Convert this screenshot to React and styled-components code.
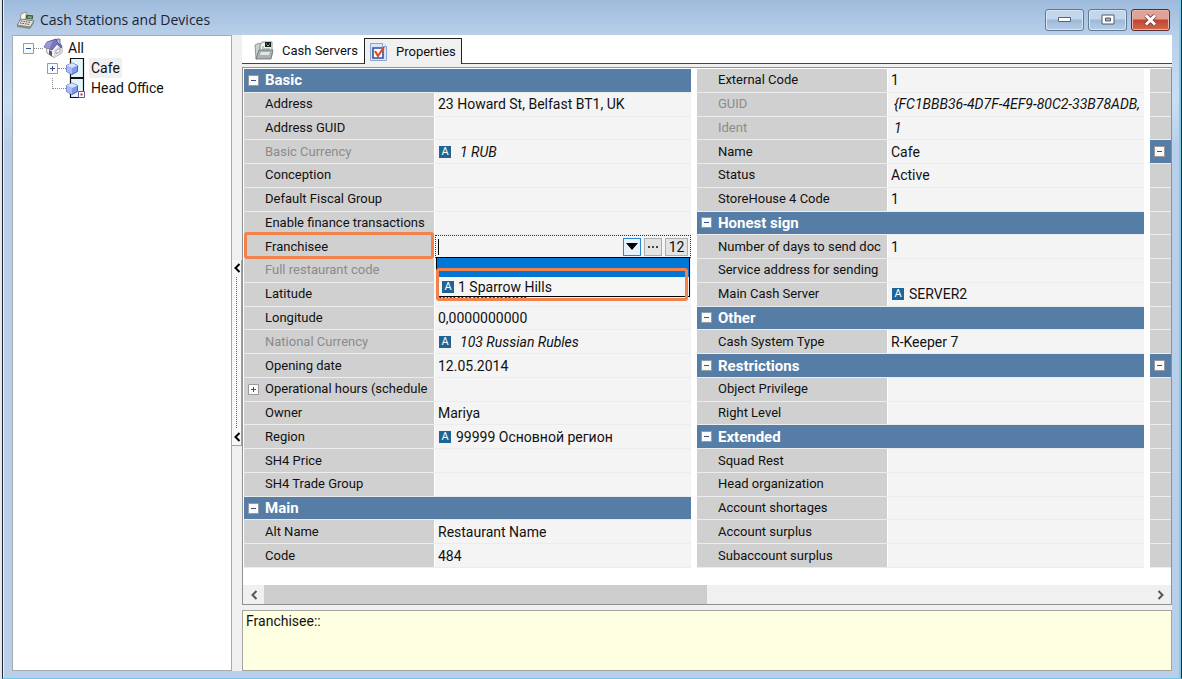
import React from 'react';
import styled, { createGlobalStyle, css } from 'styled-components';

const GlobalStyle = createGlobalStyle`
* {
    box-sizing: border-box;
}
body {
    margin: 0;
    font-family: Roboto, "Liberation Sans", sans-serif;
    font-size: 14px;
    line-height: 20px;
    color: #111;
}
button, input {
    font: inherit;
    color: inherit;
    margin: 0;
    padding: 0;
}
`;

const basic = [
	{ section: 'Basic' },
	{ label: 'Address', value: '23 Howard St, Belfast BT1, UK' },
	{ label: 'Address GUID' },
	{ label: 'Basic Currency', value: '1 RUB', locked: true, link: true },
	{ label: 'Conception' },
	{ label: 'Default Fiscal Group' },
	{ label: 'Enable finance transactions' },
	{ label: 'Franchisee', editor: true },
	{ label: 'Full restaurant code', locked: true },
	{ label: 'Latitude', value: '0,0000000000' },
	{ label: 'Longitude', value: '0,0000000000' },
	{ label: 'National Currency', value: '103 Russian Rubles', locked: true, link: true },
	{ label: 'Opening date', value: '12.05.2014' },
	{ label: 'Operational hours (schedule', expandable: true },
	{ label: 'Owner', value: 'Mariya' },
	{ label: 'Region', value: '99999 Основной регион', link: true },
	{ label: 'SH4 Price' },
	{ label: 'SH4 Trade Group' },
	{ section: 'Main' },
	{ label: 'Alt Name', value: 'Restaurant Name' },
	{ label: 'Code', value: '484' },
];

const extra = [
	{ label: 'External Code', value: '1' },
	{ label: 'GUID', value: '{FC1BBB36-4D7F-4EF9-80C2-33B78ADB,', locked: true },
	{ label: 'Ident', value: '1', locked: true },
	{ label: 'Name', value: 'Cafe' },
	{ label: 'Status', value: 'Active' },
	{ label: 'StoreHouse 4 Code', value: '1' },
	{ section: 'Honest sign' },
	{ label: 'Number of days to send doc', value: '1' },
	{ label: 'Service address for sending' },
	{ label: 'Main Cash Server', value: 'SERVER2', link: true },
	{ section: 'Other' },
	{ label: 'Cash System Type', value: 'R-Keeper 7' },
	{ section: 'Restrictions' },
	{ label: 'Object Privilege' },
	{ label: 'Right Level' },
	{ section: 'Extended' },
	{ label: 'Squad Rest' },
	{ label: 'Head organization' },
	{ label: 'Account shortages' },
	{ label: 'Account surplus' },
	{ label: 'Subaccount surplus' },
];

// third column is cut by the panel edge, only its section marks are seen
const edge = Array.from({ length: 21 }, (_, i) => i === 3 || i === 12);

const RegisterIcon = () => (
	<svg width="20" height="18" viewBox="0 0 20 18" aria-hidden="true">
		<path d="M5 3l5-2 1 7-7 2z" fill="#f8f8f2" stroke="#77776f" strokeWidth=".7" />
		<path d="M10 3l8 1-1 5-8-1z" fill="#3f5a45" stroke="#c9d0c8" strokeWidth=".9" />
		<path d="M12 5l4 .5-.5 2-4-.5z" fill="#7fa588" />
		<path d="M1 14l4-6 13 2-4 6z" fill="#e6e4dc" stroke="#66665f" strokeWidth=".8" />
		<path d="M1 14l13 2v2L1 16zM14 16l4-6v2l-4 6z" fill="#8b8a82" />
		<path d="M5 10l10 1.500M4 12l10 1.500" stroke="#4a4a45" strokeWidth="1" strokeDasharray="1.500 1" />
	</svg>
);

const HouseIcon = () => (
	<svg width="20" height="20" viewBox="0 0 20 20" aria-hidden="true">
		<path d="M3 9l1 6 7 4.500 8-4.500V9l-6-5z" fill="#f6f5fa" stroke="#85838f" strokeWidth=".8" />
		<path d="M11 12v7.500l8-4.500V9l-2-2z" fill="#dcdbe8" />
		<path d="M1 9l3-5 9-3 6 7-1 2-4-4-5 6z" fill="#7a78bd" stroke="#4c4a88" strokeWidth=".8" />
		<path d="M1 9l3-5 6-1-4 8z" fill="#9b99d4" />
		<path d="M14 4V1h3v6z" fill="#b9b8de" stroke="#4c4a88" strokeWidth=".7" />
		<path d="M6 12l3 1.500v5L6 16.500z" fill="#6b5348" />
		<path d="M13 12.500l4-2v3l-4 2z" fill="#fff" stroke="#8b8b98" strokeWidth=".7" />
	</svg>
);

const PlaceIcon = ({ marked }) => (
	<svg width="20" height="20" viewBox="0 0 20 20" aria-hidden="true">
		<path d="M4.500 .5h13v19h-13z" fill="#e3f4fa" stroke="#111" strokeWidth="1.200" />
		<path d="M6 5l5.500 2.500v6L6 16.500 .5 13.500v-6z" fill="#7f9be8" stroke="#4055a8" strokeWidth=".9" />
		<path d="M6 5l5.500 2.500L6 10 .5 7.500z" fill="#d6e2ff" />
		<path d="M6 10v6.500L.5 13.500v-6z" fill="#a6bcf5" />
		{marked && (
			<>
				<path d="M12.500 13.500h6v6h-6z" fill="#fff" stroke="#5a5aa0" />
				<path d="M14.500 15.500h2v2h-2z" fill="#d2233c" />
			</>
		)}
	</svg>
);

const FolderIcon = () => (
	<svg width="22" height="20" viewBox="0 0 22 20" aria-hidden="true">
		<path d="M2 4l4-2 2 1v13l-5 2z" fill="#c9cecf" stroke="#7d8587" strokeWidth=".8" />
		<path d="M7 4l2-3h10v13H7z" fill="#eef1f0" stroke="#747c7d" strokeWidth=".8" />
		<path d="M12 1h6v5h-6z" fill="#15201a" />
		<path d="M13 2.500h1v1h-1zM16 2.500h1v1h-1zM14 4h2v1h-2z" fill="#6fdc7c" />
		<path d="M9 6h2M9 8h8" stroke="#8f9798" />
		<path d="M6 9h14l-2 9H3z" fill="#a9b1b2" stroke="#687072" strokeWidth=".8" />
		<path d="M8 11h9l-1 3H7z" fill="#e2e6e6" />
	</svg>
);

const CheckIcon = () => (
	<svg width="17" height="20" viewBox="0 0 17 20" aria-hidden="true">
		<path d="M.5 1.500h12l4 3v14H.5z" fill="#d9e6f7" stroke="#8aa6d0" />
		<path d="M12.500 1.500v3h4" fill="#fff" stroke="#8aa6d0" />
		<path d="M3 6h10v10H3z" fill="#fff" stroke="#31509c" strokeWidth="1.600" />
		<path d="M5 9l3 5 6-9" fill="none" stroke="#e2492f" strokeWidth="2.200" />
	</svg>
);

const Expander = ({ open }) => (
	<svg width="11" height="11" viewBox="0 0 11 11" aria-hidden="true">
		<path d="M.5 .5h10v10H.5z" fill="#fbfbfb" stroke="#9a9a9a" />
		<path d={open ? 'M3 5.500h5' : 'M3 5.500h5M5.500 3v5'} stroke="#35508c" />
	</svg>
);

const Chevron = ({ right }) => (
	<svg width="8" height="10" viewBox="0 0 8 10" aria-hidden="true">
		<path d={right ? 'M1.500 1l4 4-4 4' : 'M6.500 1l-4 4 4 4'} fill="none" stroke="currentColor" strokeWidth="2" />
	</svg>
);

const Row = ({ row }) => {
	if (row.section) {
		return (
			<SectionRow>
				<SectionCell colSpan="2">
					<Toggle aria-label={row.section}><Expander open /></Toggle>
					{row.section}
				</SectionCell>
			</SectionRow>
		);
	}
	return (
		<PropertyRow>
			<LabelCell scope="row" $locked={row.locked} $marked={row.editor}>
				{row.expandable && <Toggle aria-label="Expand"><Expander /></Toggle>}
				{row.editor ? <label htmlFor="franchisee">{row.label}</label> : row.label}
			</LabelCell>
			{row.editor ? (
				<EditorCell>
					<Editor>
						<EditorInput id="franchisee" />
						<EditorButton $primary aria-label="Open list">
							<svg width="12" height="7" viewBox="0 0 12 7"><path d="M0 0h12L6 7z" fill="#000" /></svg>
						</EditorButton>
						<EditorButton aria-label="Browse">
							<svg width="10" height="2" viewBox="0 0 10 2"><path d="M0 0h2v2H0zM4 0h2v2H4zM8 0h2v2H8z" fill="#444" /></svg>
						</EditorButton>
						<EditorButton $wide>12</EditorButton>
					</Editor>
					<Options role="listbox">
						<Option role="option" aria-selected="true" $active />
						<Option role="option" aria-selected="false"><Tag>A</Tag>1 Sparrow Hills</Option>
						<OptionMark />
					</Options>
				</EditorCell>
			) : (
				<ValueCell $locked={row.locked} $link={row.link}>
					{row.link && <Tag>A</Tag>}
					<span>{row.value}</span>
				</ValueCell>
			)}
		</PropertyRow>
	);
};

const App = () => {
	return (
		<Desktop>
			<GlobalStyle />
			<Window>
				<TitleBar>
					<RegisterIcon />
					<Title>Cash Stations and Devices</Title>
					<WindowButton aria-label="Minimize">
						<svg width="15" height="7" viewBox="0 0 15 7"><path d="M1.500 1.500h12v4h-12z" fill="#fff" stroke="#5a6478" /></svg>
					</WindowButton>
					<WindowButton aria-label="Maximize">
						<svg width="14" height="11" viewBox="0 0 14 11"><path d="M1 1h12v9H1z" fill="#fff" stroke="#4f596d" /><path d="M4.500 4h5v3h-5z" fill="#9fb4d0" stroke="#4f596d" /></svg>
					</WindowButton>
					<WindowButton $close aria-label="Close">
						<svg width="15" height="12" viewBox="0 0 15 12"><path d="M3 1.500l9 9M12 1.500l-9 9" stroke="#6b3a3a" strokeWidth="4.500" /><path d="M3 1.500l9 9M12 1.500l-9 9" stroke="#fff" strokeWidth="3" /></svg>
					</WindowButton>
				</TitleBar>
				<Content>
					<Tree>
						<TreeItem>
							<Toggle aria-label="Collapse All"><Expander open /></Toggle>
							<Dots />
							<HouseIcon />
							<TreeText>All</TreeText>
						</TreeItem>
						<Branch>
							<TreeItem>
								<Toggle aria-label="Expand Cafe"><Expander /></Toggle>
								<Dots $short />
								<PlaceIcon />
								<TreeText $selected>Cafe</TreeText>
							</TreeItem>
							<TreeItem>
								<Corner />
								<PlaceIcon marked />
								<TreeText>Head Office</TreeText>
							</TreeItem>
						</Branch>
					</Tree>
					<Splitter>
						<SplitterButton aria-label="Hide tree">
							<Chevron />
							<SplitterDots />
							<Chevron />
						</SplitterButton>
					</Splitter>
					<Main>
						<Tabs role="tablist">
							<Tab role="tab"><FolderIcon />Cash Servers</Tab>
							<Tab role="tab" aria-selected="true" $active><CheckIcon />Properties</Tab>
						</Tabs>
						<Sheet>
							<Columns>
								<PropertyTable>
									<tbody>{basic.map((row, i) => <Row key={i} row={row} />)}</tbody>
								</PropertyTable>
								<PropertyTable>
									<tbody>{extra.map((row, i) => <Row key={i} row={row} />)}</tbody>
								</PropertyTable>
								<EdgeColumn>
									{edge.map((section, i) => (
										<EdgeCell key={i} $section={section}>{section && <Expander open />}</EdgeCell>
									))}
								</EdgeColumn>
							</Columns>
							<ScrollBar>
								<ScrollButton aria-label="Scroll left"><Chevron /></ScrollButton>
								<ScrollTrack><ScrollThumb /></ScrollTrack>
								<ScrollButton aria-label="Scroll right"><Chevron right /></ScrollButton>
							</ScrollBar>
						</Sheet>
						<Hint>Franchisee::</Hint>
					</Main>
				</Content>
			</Window>
		</Desktop>
	);
};
export default App;

const Desktop = styled.div`
display: flex;
min-height: 100vh;
padding-left: 2px;
background: #e4e9ef;
`;
const Window = styled.div`
flex: 1;
display: flex;
flex-direction: column;
min-width: 0;
padding: 0 9px 7px;
border-left: 1px solid #1c2530;
border-right: 1px solid #14323c;
border-bottom: 1px solid #6fc6e6;
background: linear-gradient(#9ebbdc, #b9cfe9 35px, #cbdff3 100px, #b9cfe9 145px);
box-shadow: inset 1px 0 #e8f2fb, inset -2px 0 #7cc9ea;
`;
const TitleBar = styled.header`
display: flex;
align-items: center;
gap: 4px;
height: 35px;
padding: 4px 2px 0 4px;
`;
const Title = styled.h1`
flex: 1;
margin: 0;
font: 400 14px/20px "Open Sans", sans-serif;
color: #1b2430;
`;
const WindowButton = styled.button`
display: flex;
align-items: center;
justify-content: center;
width: 39px;
height: 22px;
border: 1px solid #5f7894;
border-radius: 3px;
background: linear-gradient(#c3d6ec 45%, #9db9d9 50%, #b7cde8);
box-shadow: inset 0 0 0 1px #d9e6f4;
${({ $close }) => $close && css`
    border-color: #5b2a2a;
    background: linear-gradient(#e0a197 45%, #c2432d 50%, #cf6a50);
    box-shadow: inset 0 0 0 1px #e6b5aa;
`}
`;
const Content = styled.div`
flex: 1;
display: flex;
min-height: 0;
background: #f0f0f0;
`;
const Tree = styled.nav`
width: 220px;
padding: 2px 0 0 10px;
border: 1px solid #a5abb3;
background: #fff;
`;
const TreeItem = styled.div`
display: flex;
align-items: center;
height: 20px;
`;
const Branch = styled.div`
padding-left: 24px;
`;
const TreeText = styled.span`
margin-left: 3px;
padding: 0 2px;
${({ $selected }) => $selected && 'background: #f0f0f0;'}
`;
const Dots = styled.span`
width: ${({ $short }) => ($short ? '8px' : '9px')};
border-top: 1px dotted #888;
`;
const Corner = styled.span`
align-self: flex-start;
width: 14px;
height: 11px;
margin-left: 5px;
border-left: 1px dotted #888;
border-bottom: 1px dotted #888;
`;
const Toggle = styled.button`
display: flex;
border: 0;
background: none;
`;
const Splitter = styled.div`
display: flex;
align-items: center;
width: 10px;
`;
const SplitterButton = styled.button`
display: flex;
flex-direction: column;
align-items: center;
justify-content: space-between;
width: 10px;
height: 186px;
padding: 3px 0;
border: 1px solid #a0a0a0;
border-width: 0 1px 1px 0;
background: #f8f8f8;
color: #000;
`;
const SplitterDots = styled.span`
flex: 1;
margin: 4px 0;
border-left: 1px dotted #2f74c0;
`;
const Main = styled.main`
flex: 1;
display: flex;
flex-direction: column;
min-width: 0;
`;
const Tabs = styled.div`
display: flex;
align-items: flex-end;
height: 29px;
padding: 2px 2px 0;
border-bottom: 1px solid #444;
background: #fff;
font-size: 13px;
`;
const Tab = styled.button`
display: flex;
align-items: center;
gap: 7px;
height: 24px;
padding: 0 6px 0 9px;
border: 0;
background: none;
white-space: nowrap;
${({ $active }) => $active && css`
    gap: 9px;
    height: 26px;
    padding: 0 5px;
    margin-bottom: -1px;
    border: 1px solid #222;
    border-bottom: 0;
    background: #f0f0f0;
`}
`;
const Sheet = styled.section`
flex: 1;
display: flex;
flex-direction: column;
margin: 3px 0 5px;
border: 1px solid #909090;
background: #fff;
`;
const Columns = styled.div`
flex: 1;
display: flex;
gap: 6px;
margin-bottom: 17px;
padding: 1px 0 0 1px;
`;
const PropertyTable = styled.table`
flex: 1;
display: grid;
grid-auto-rows: 1fr;
min-width: 0;
tbody {
    display: contents;
}
`;
const PropertyRow = styled.tr`
display: grid;
grid-template-columns: 190px 1fr;
gap: 1px;
min-height: 20px;
border-bottom: 1px solid #ececec;
`;
const SectionRow = styled.tr`
display: grid;
min-height: 20px;
border-bottom: 1px solid #ececec;
`;
const SectionCell = styled.th`
display: flex;
align-items: center;
gap: 6px;
padding: 0 4px;
background: #567da6;
color: #fff;
font-size: 15px;
text-align: left;
`;
const LabelCell = styled.th`
position: relative;
display: flex;
align-items: center;
gap: 6px;
min-width: 0;
padding: 0 0 0 21px;
overflow: hidden;
background: #d0d0d0;
color: ${({ $locked }) => ($locked ? '#8b8b8b' : '#111')};
font-size: 13px;
font-weight: 400;
text-align: left;
white-space: nowrap;
&:has(button) {
    padding-left: 4px;
}
${({ $marked }) => $marked && css`
    overflow: visible;
    &::after {
        content: '';
        position: absolute;
        inset: -3px 0 -1px;
        border: 3px solid #f1824c;
        border-radius: 3px;
    }
`}
`;
const ValueCell = styled.td`
display: flex;
align-items: center;
gap: 5px;
min-width: 0;
padding: 0 2px 0 ${({ $link }) => ($link ? '4px' : '3px')};
overflow: hidden;
background: #f4f4f4;
white-space: nowrap;
${({ $locked, $link }) => $locked && css`
    font-style: italic;
    gap: 9px;
    ${!$link && 'padding-left: 6px;'}
`}
`;
const Tag = styled.span`
flex: none;
width: 12px;
height: 12px;
background: #1d6594;
color: #fff;
font-size: 11px;
font-style: normal;
line-height: 12px;
text-align: center;
`;
const EditorCell = styled.td`
position: relative;
min-width: 0;
padding: 0;
`;
const Editor = styled.div`
display: flex;
align-items: center;
gap: 3px;
height: 100%;
padding: 1px 2px;
border: 1px dotted #333;
background: #f4f4f4;
`;
const EditorInput = styled.input`
flex: 1;
min-width: 0;
height: 16px;
border: 0;
border-left: 1px solid #000;
outline: 0;
background: transparent;
`;
const EditorButton = styled.button`
display: flex;
align-items: center;
justify-content: center;
width: ${({ $wide }) => ($wide ? '23px' : '18px')};
height: 18px;
border: 1px solid ${({ $primary }) => ($primary ? '#2a84d2' : '#adadad')};
background: ${({ $primary }) => ($primary ? '#e5f1fb' : '#e3e3e3')};
`;
const Options = styled.div`
position: absolute;
z-index: 1;
top: calc(100% - 1px);
left: 1px;
right: 1px;
border: 1px solid #000;
background: #f6f6f6;
`;
const Option = styled.div`
display: flex;
align-items: center;
gap: 4px;
height: 19px;
padding: 0 5px;
${({ $active }) => $active && 'background: #0077d7;'}
`;
const OptionMark = styled.span`
position: absolute;
inset: 10px 1px -5px -1px;
border: 3px solid #f1824c;
border-radius: 3px;
`;
const EdgeColumn = styled.div`
display: grid;
grid-auto-rows: 1fr;
width: 21px;
`;
const EdgeCell = styled.div`
display: flex;
align-items: center;
padding-left: 4px;
border-bottom: 1px solid #ececec;
background: ${({ $section }) => ($section ? '#567da6' : '#d0d0d0')};
`;
const ScrollBar = styled.div`
display: flex;
height: 19px;
background: #f0f0f0;
`;
const ScrollButton = styled.button`
display: flex;
align-items: center;
justify-content: center;
width: 21px;
border: 0;
background: none;
color: #555;
`;
const ScrollTrack = styled.div`
flex: 1;
display: flex;
`;
const ScrollThumb = styled.div`
width: 50%;
background: #cdcdcd;
`;
const Hint = styled.div`
height: 61px;
padding: 0 3px;
border: 1px solid #a5a5a0;
background: #ffffe1;
`;
